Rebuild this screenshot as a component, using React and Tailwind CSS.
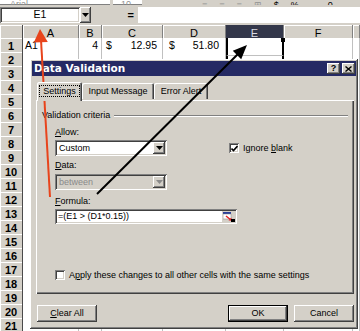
import React from 'react';

const raised = 'shadow-[inset_-1px_-1px_#404040,inset_1px_1px_#ffffff,inset_-2px_-2px_#808080,inset_2px_2px_#d4d0c8]';
const sunken = 'shadow-[inset_1px_1px_#808080,inset_-1px_-1px_#ffffff,inset_2px_2px_#404040,inset_-2px_-2px_#d4d0c8]';

const cols = ['A', 'B', 'C', 'D', 'E', 'F', ''];
const rows = Array.from({ length: 21 }, (_, i) => i + 1);

const DownArrow = ({ color = '#000' }) => (
  <svg width="7" height="4" viewBox="0 0 7 4">
    <path d="M0 0h7L3.5 4z" fill={color} />
  </svg>
);

const Key = ({ children }) => <span className="underline underline-offset-1">{children}</span>;

const Checkbox = ({ checked }) => (
  <div className={`w-[10px] h-[10px] bg-white flex items-center justify-center ${sunken}`}>
    {checked && (
      <svg width="7" height="7" viewBox="0 0 7 7">
        <path d="M0.5 3.5l2 2 4-4.5" stroke="#000" strokeWidth="1.6" fill="none" />
      </svg>
    )}
  </div>
);

const Select = ({ value, disabled }) => (
  <div className={`flex items-center w-[112px] h-[16px] pr-[2px] ${disabled ? 'bg-[#d4d0c8] text-[#8a8a8a]' : 'bg-white'} ${sunken}`}>
    <div className="flex-1 pl-[4px]">{value}</div>
    <div className={`w-[12px] h-[12px] bg-[#d4d0c8] flex items-center justify-center ${raised}`}>
      <DownArrow color={disabled ? '#8a8a8a' : '#000'} />
    </div>
  </div>
);

const Button = ({ children, isDefault }) => (
  <div className={`w-[60px] h-[17px] flex items-center justify-center ${isDefault ? 'border border-black' : ''}`}>
    <div className={`w-full h-full flex items-center justify-center ${raised}`}>{children}</div>
  </div>
);

const SheetRow = ({ n }) => (
  <div className="grid grid-cols-[23px_56px_23px_61px_63px_58px_69px_1fr] h-[14px]">
    <div className="bg-[#d4d0c8] border-r border-b border-[#4a4a4a] shadow-[inset_1px_1px_#ffffff] flex items-center justify-center font-bold text-[11px]">{n}</div>
    {cols.map((c, i) => {
      let content = null;
      let extra = '';
      if (n === 1) {
        if (c === 'A') content = <div className="pl-[2px]">A1</div>;
        if (c === 'B') content = <div className="flex-1 text-right pr-[3px]">4</div>;
        if (c === 'C') content = <div className="flex-1 flex justify-between pl-[4px] pr-[5px]"><span>$</span><span>12.95</span></div>;
        if (c === 'D') content = <div className="flex-1 flex justify-between pl-[6px] pr-[6px]"><span>$</span><span>51.80</span></div>;
        if (c === 'E') extra = 'border-l-2 border-r-2 border-l-black border-r-black relative';
      }
      if (n === 2 && c === 'E') extra = 'border-l-2 border-r-2 border-l-black border-r-black';
      return (
        <div key={i} className={`bg-white border-r border-b border-[#c0c0c0] flex items-center text-[10.5px] ${extra}`}>
          {content}
          {n === 1 && c === 'E' && <div className="absolute right-[-3px] top-0 w-[4px] h-[4px] bg-black" />}
          {n === 2 && c === 'E' && <div className="self-start w-full h-[4px] bg-[#b4c2d8]" />}
        </div>
      );
    })}
  </div>
);

export default function App() {
  return (
    <div className="relative w-[360px] h-[331px] overflow-hidden bg-[#d4d0c8] font-['Liberation_Sans',Arial,sans-serif] text-black">
      {/* toolbar remnant */}
      <div className="flex h-[5px] overflow-hidden items-end text-[9px] leading-[10px] text-[#909090]">
        <div className="w-[110px] h-full bg-white border-b border-[#808080] flex items-end pl-[10px]"><span className="translate-y-[5px]">Arial</span></div>
        <div className="ml-[3px] w-[29px] h-full bg-white border-b border-[#808080] flex items-end pl-[8px]"><span className="translate-y-[5px]">10</span></div>
        <div className="flex-1 flex items-end gap-[12px] pl-[60px] h-full">
          <span className="translate-y-[5px]">≡</span>
          <span className="translate-y-[5px]">≡</span>
          <span className="translate-y-[5px]">≡</span>
          <span className="translate-y-[5px]">⊞</span>
          <span className="translate-y-[5px] text-black">$</span>
          <span className="translate-y-[5px] text-black">%</span>
          <span className="translate-y-[5px] text-black">,</span>
          <span className="translate-y-[5px] text-black">.0</span>
        </div>
      </div>

      {/* formula bar */}
      <div className="flex h-[16px] mt-[2px]">
        <div className={`w-[80px] bg-white flex items-center justify-center text-[10.5px] ${sunken}`}>E1</div>
        <div className={`w-[11px] flex items-center justify-center ${raised}`}><DownArrow /></div>
        <div className="w-[47px] flex items-center justify-end pr-[4px] font-bold text-[11px]">=</div>
        <div className="flex-1 bg-white" />
      </div>

      {/* column headers */}
      <div className="grid grid-cols-[23px_56px_23px_61px_63px_58px_69px_1fr] h-[13px] mt-[2px]">
        <div className="bg-[#d4d0c8] border-r border-b border-[#4a4a4a] shadow-[inset_1px_1px_#ffffff]" />
        {cols.map((c, i) => (
          <div
            key={i}
            className={`border-r border-b border-[#808080] flex items-center justify-center text-[11px] ${c === 'E' ? 'bg-[#33374a] text-[#dcdce4]' : 'bg-[#d4d0c8] shadow-[inset_1px_1px_#ffffff]'}`}
          >
            {c}
          </div>
        ))}
      </div>

      {rows.map((n) => <SheetRow key={n} n={n} />)}

      {/* dialog */}
      <div className={`absolute left-[30px] top-[59px] w-[328px] h-[270px] bg-[#d4d0c8] p-[2px] text-[9px] leading-[11px] ${raised}`}>
        <div className="h-[15px] bg-[#252a64] flex items-center justify-between pl-[2px] pr-[1px]">
          <span className="font-['DejaVu_Sans',sans-serif] font-bold text-[10.5px] text-white">Data Validation</span>
          <div className="flex gap-[2px]">
            <div className={`w-[13px] h-[11px] bg-[#d4d0c8] flex items-center justify-center font-bold text-[9px] leading-none ${raised}`}>?</div>
            <div className={`w-[13px] h-[11px] bg-[#d4d0c8] flex items-center justify-center ${raised}`}>
              <svg width="7" height="6" viewBox="0 0 7 6"><path d="M0.5 0.5l6 5M6.5 0.5l-6 5" stroke="#000" strokeWidth="1.4" /></svg>
            </div>
          </div>
        </div>

        <div className="pl-[4px] pr-[2px]">
          {/* tabs */}
          <div className="flex items-end h-[18px] mt-[6px] ml-[1px]">
            <div className="relative z-10 -mb-px w-[45px] h-[19px] bg-[#d4d0c8] rounded-t-[2px] shadow-[inset_1px_1px_#ffffff,inset_-1px_0_#404040,inset_-2px_0_#808080] flex items-center justify-center pb-[1px]">
              <span className="border border-dotted border-black px-[3px] leading-[10px]">Settings</span>
            </div>
            <div className="mb-px w-[72px] h-[16px] rounded-t-[2px] shadow-[inset_1px_1px_#ffffff,inset_-1px_0_#404040,inset_-2px_0_#808080] flex items-center justify-center">Input Message</div>
            <div className="mb-px w-[54px] h-[16px] rounded-t-[2px] shadow-[inset_1px_1px_#ffffff,inset_-1px_0_#404040,inset_-2px_0_#808080] flex items-center justify-center">Error Alert</div>
          </div>

          {/* panel */}
          <div className="h-[194px] pt-[10px] shadow-[inset_1px_1px_#ffffff,inset_-1px_-1px_#404040,inset_-2px_-2px_#808080]">
            <div className="flex items-center h-[11px] pl-[6px] pr-[6px]">
              <span>Validation criteria</span>
              <div className="flex-1 ml-[4px] h-[2px] border-t border-t-[#808080] border-b border-b-white" />
            </div>
            <div className="pl-[19px]">
              <div className="mt-[6px] h-[11px]"><Key>A</Key>llow:</div>
              <div className="mt-[2px] flex items-center">
                <Select value="Custom" />
                <div className="ml-[62px] flex items-center gap-[4px]">
                  <Checkbox checked />
                  <span>Ignore <Key>b</Key>lank</span>
                </div>
              </div>
              <div className="mt-[4px] h-[11px]"><Key>D</Key>ata:</div>
              <div className="mt-[3px]"><Select value="between" disabled /></div>
              <div className="mt-[6px] h-[11px]"><Key>F</Key>ormula:</div>
              <div className={`mt-[2px] w-[182px] h-[15px] bg-white flex items-center pl-[3px] pr-[2px] ${sunken}`}>
                <span className="flex-1">=(E1 &gt; (D1*0.15))</span>
                <div className="w-[13px] h-[11px] bg-[#d4d0c8] flex items-center justify-center">
                  <svg width="12" height="10" viewBox="0 0 12 10">
                    <rect x="0" y="0" width="8" height="2" fill="#2a3f9a" />
                    <rect x="0" y="2" width="8" height="5" fill="#ffffff" stroke="#808080" strokeWidth="0.5" />
                    <path d="M3 4l5 4" stroke="#e02020" strokeWidth="1.5" />
                    <path d="M8.5 8.5l-3 0l3-3z" fill="#e02020" />
                    <rect x="8" y="7" width="4" height="3" fill="#000" />
                  </svg>
                </div>
              </div>
              <div className="mt-[46px] h-[10px] flex items-center gap-[4px]">
                <Checkbox />
                <span>A<Key>p</Key>ply these changes to all other cells with the same settings</span>
              </div>
            </div>
          </div>

          {/* buttons */}
          <div className="flex items-center mt-[11px] pl-[1px]">
            <Button><span><Key>C</Key>lear All</span></Button>
            <div className="flex-1" />
            <Button isDefault>OK</Button>
            <div className="w-[6px]" />
            <Button>Cancel</Button>
          </div>
        </div>
      </div>

      {/* annotation arrows */}
      <svg className="absolute left-0 top-0 pointer-events-none" width="360" height="331" viewBox="0 0 360 331">
        <line x1="50" y1="197" x2="41" y2="40" stroke="#e8441c" strokeWidth="2" />
        <polygon points="40,29 47.8,42 33.8,42.6" fill="#e8441c" />
        <line x1="97" y1="194" x2="240" y2="52" stroke="#000" strokeWidth="2" />
        <polygon points="247,45 241.2,59.3 232.8,50.7" fill="#000" />
      </svg>
    </div>
  );
}
